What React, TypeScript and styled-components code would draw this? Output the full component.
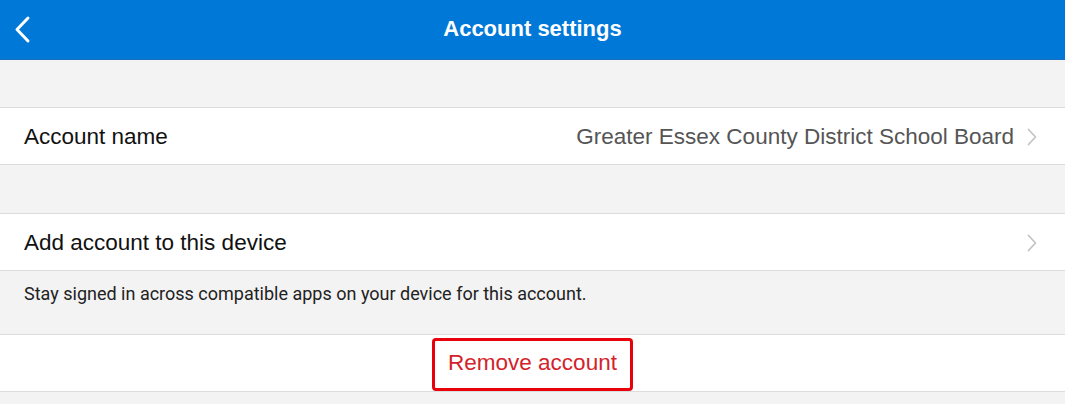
import React from "react";
import styled, { createGlobalStyle } from "styled-components";

const Global = createGlobalStyle`
  html, body { margin: 0; padding: 0; background: #f3f3f3; }
  body { font-family: "Liberation Sans", Arial, sans-serif; -webkit-font-smoothing: antialiased; }
`;

const Page = styled.div`
  width: 1065px;
  height: 404px;
  background: #f3f3f3;
  display: flex;
  flex-direction: column;
  overflow: hidden;
`;

const Header = styled.header`
  height: 60px;
  background: #0078d7;
  border-bottom: 1px solid #1a6fbd;
  box-sizing: border-box;
  display: grid;
  grid-template-columns: 60px 1fr 60px;
  align-items: center;
`;

const BackButton = styled.button`
  background: none;
  border: 0;
  padding: 0 0 0 13px;
  height: 60px;
  display: flex;
  align-items: center;
  cursor: pointer;
`;

const Title = styled.h1`
  margin: 0;
  color: #fff;
  font-size: 22px;
  font-weight: 700;
  text-align: center;
  padding-bottom: 3px;
`;

const Spacer = styled.div<{ $h: number }>`
  height: ${(p) => p.$h}px;
  flex: none;
`;

const Row = styled.div<{ $center?: boolean }>`
  height: 58px;
  box-sizing: border-box;
  background: #fff;
  border-top: 1px solid #dcdcdc;
  border-bottom: 1px solid #dcdcdc;
  display: flex;
  align-items: center;
  justify-content: ${(p) => (p.$center ? "center" : "space-between")};
  padding: ${(p) => (p.$center ? "0" : "1px 28px 0 24px")};
  flex: none;
`;

const Label = styled.span`
  font-size: 22.5px;
  color: #111;
`;

const Trail = styled.span`
  display: flex;
  align-items: center;
  gap: 13px;
  font-size: 22.5px;
  color: #555;
`;

const Note = styled.p`
  margin: 0;
  padding: 12px 24px 0;
  height: 63px;
  box-sizing: border-box;
  font-family: Roboto, "Liberation Sans", sans-serif;
  font-size: 18px;
  color: #222;
  flex: none;
`;

const DangerButton = styled.button`
  font-family: "Liberation Sans", Arial, sans-serif;
  font-size: 22.5px;
  color: #d3232a;
  background: #fff;
  border: 3px solid #e8000b;
  border-radius: 4px;
  width: 201px;
  height: 53px;
  margin-top: 2px;
  display: flex;
  align-items: center;
  justify-content: center;
  padding: 0 0 2px;
  cursor: pointer;
`;

const Chevron = () => (
  <svg width="10" height="18" viewBox="0 0 10 18">
    <path d="M1.5 1.5 L8.5 9 L1.5 16.5" fill="none" stroke="#c4c4c4" strokeWidth="1.8" strokeLinecap="round" strokeLinejoin="round" />
  </svg>
);

const BackIcon = () => (
  <svg width="20" height="30" viewBox="0 0 20 30">
    <path d="M15 3 L4 14.5 L15 26" fill="none" stroke="#fff" strokeWidth="3" strokeLinecap="round" strokeLinejoin="round" />
  </svg>
);

export default function App() {
  return (
    <Page>
      <Global />
      <Header>
        <BackButton aria-label="Back">
          <BackIcon />
        </BackButton>
        <Title>Account settings</Title>
        <div />
      </Header>
      <Spacer $h={47} />
      <Row>
        <Label>Account name</Label>
        <Trail>
          Greater Essex County District School Board
          <Chevron />
        </Trail>
      </Row>
      <Spacer $h={48} />
      <Row>
        <Label>Add account to this device</Label>
        <Trail>
          <Chevron />
        </Trail>
      </Row>
      <Note>Stay signed in across compatible apps on your device for this account.</Note>
      <Row $center>
        <DangerButton>Remove account</DangerButton>
      </Row>
    </Page>
  );
}
